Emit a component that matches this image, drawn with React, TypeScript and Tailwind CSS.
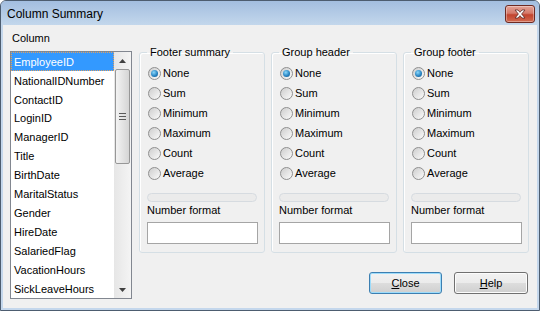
import React from 'react';

const columns = [
  'EmployeeID',
  'NationalIDNumber',
  'ContactID',
  'LoginID',
  'ManagerID',
  'Title',
  'BirthDate',
  'MaritalStatus',
  'Gender',
  'HireDate',
  'SalariedFlag',
  'VacationHours',
  'SickLeaveHours',
];

const options = ['None', 'Sum', 'Minimum', 'Maximum', 'Count', 'Average'];

const groups = ['Footer summary', 'Group header', 'Group footer'];

function Radio({ label, checked }: { label: string; checked?: boolean }) {
  return (
    <div className="flex h-[20px] items-center pl-[1px]">
      <div className="flex h-[13px] w-[13px] items-center justify-center rounded-full border border-[#8f8f8f] bg-linear-to-br from-[#cdcdcd] to-[#fbfbfb]">
        {checked && (
          <div className="h-[7px] w-[7px] rounded-full bg-[radial-gradient(circle_at_40%_35%,#8ad8fb,#2a86c4_55%,#0c4f84)]" />
        )}
      </div>
      <span className="ml-[2px] leading-[13px]">{label}</span>
    </div>
  );
}

function GroupBox({ title }: { title: string }) {
  return (
    <fieldset className="w-[126px] rounded-[3px] border border-[#d5dfe5] pl-[7px] pr-[6px] pb-[8px] shadow-[inset_1px_1px_0_#fff]">
      <legend className="px-[3px] leading-[13px]">{title}</legend>
      <div className="flex flex-col pt-[4px]">
        {options.map((o, i) => (
          <Radio key={o} label={o} checked={i === 0} />
        ))}
      </div>
      <div className="mt-[10px] h-[9px] w-[110px] rounded-full border border-[#d6dbe0] bg-[#ebebeb]" />
      <div className="mt-[2px] leading-[13px]">Number format</div>
      <div className="mt-[5px] h-[22px] w-[111px] border border-[#a5a5a5] bg-white" />
    </fieldset>
  );
}

function ScrollArrow({ up }: { up?: boolean }) {
  return (
    <div className="flex h-[17px] w-[17px] items-center justify-center">
      <svg width="7" height="4" viewBox="0 0 7 4">
        {up ? (
          <path d="M3.5 0 L7 4 L0 4 Z" fill="#404040" />
        ) : (
          <path d="M0 0 L7 0 L3.5 4 Z" fill="#404040" />
        )}
      </svg>
    </div>
  );
}

export default function App() {
  return (
    <div className="flex h-[311px] w-[540px] flex-col overflow-hidden rounded-t-[6px] border border-[#4d5d70] bg-[#c4d7ec] font-['Liberation_Sans',Arial,sans-serif] text-[11px] text-black">
      {/* title bar */}
      <div className="flex h-[24px] items-start justify-between bg-linear-to-b from-[#a3bee0] to-[#c3d7ec] pt-[4px]">
        <span className="ml-[6px] h-[19px] text-[12px] leading-[19px] text-black">Column Summary</span>
        <div className="mr-[4px] flex h-[18px] w-[30px] items-center justify-center rounded-[3px] border border-[#6e2a22] bg-[linear-gradient(to_bottom,#e4a296_0%,#d57a6a_45%,#c2442f_55%,#d26a4f_100%)] shadow-[inset_0_0_0_1px_rgba(255,255,255,0.35)]">
          <svg width="12" height="10" viewBox="0 0 12 10">
            <path
              d="M1 1 L4 1 L6 3.3 L8 1 L11 1 L7.6 5 L11 9 L8 9 L6 6.7 L4 9 L1 9 L4.4 5 Z"
              fill="#fff"
              stroke="#5a2a24"
              strokeWidth="0.8"
              strokeLinejoin="round"
            />
          </svg>
        </div>
      </div>

      {/* body */}
      <div className="mx-[2px] mb-[2px] flex flex-1 bg-[#f0f0f0] pl-[7px] pr-[8px]">
        <div className="flex flex-col pt-[7px]">
          <div className="mb-[6px] h-[13px] pl-[2px] leading-[13px]">Column</div>
          <div className="flex h-[248px] w-[122px] border border-[#828790] bg-white">
            <div className="flex w-[103px] flex-col">
              {columns.map((c, i) => (
                <div
                  key={c}
                  className={
                    i === 0
                      ? 'flex h-[19px] items-center bg-[#3399ff] pl-[3px] pt-[1px] text-white outline-1 -outline-offset-1 outline-dotted outline-[#e0a060]'
                      : 'flex h-[19px] items-center pl-[3px] pt-[1px]'
                  }
                >
                  {c}
                </div>
              ))}
            </div>
            <div className="flex w-[17px] flex-col bg-linear-to-r from-[#e6e6e6] to-[#f4f4f4]">
              <ScrollArrow up />
              <div className="mx-[1px] flex h-[95px] flex-col items-center justify-center gap-[2px] rounded-[2px] border border-[#979797] bg-linear-to-r from-[#f3f3f3] to-[#d5d5d5]">
                <div className="h-[1px] w-[7px] bg-[#5a5a5a]" />
                <div className="h-[1px] w-[7px] bg-[#5a5a5a]" />
                <div className="h-[1px] w-[7px] bg-[#5a5a5a]" />
              </div>
              <div className="flex-1" />
              <ScrollArrow />
            </div>
          </div>
        </div>

        <div className="ml-[7px] flex flex-1 flex-col pt-[21px]">
          <div className="flex gap-[6px]">
            {groups.map((g) => (
              <GroupBox key={g} title={g} />
            ))}
          </div>
          <div className="mt-[19px] flex justify-end gap-[12px] pr-[1px]">
            <button className="flex h-[22px] w-[73px] items-center justify-center rounded-[3px] border border-[#3c7fb1] bg-[linear-gradient(to_bottom,#f2f2f2_0%,#ebebeb_50%,#dddddd_50%,#cfcfcf_100%)] shadow-[inset_0_0_0_1px_#9ddcfb]">
              <span>
                <span className="underline">C</span>lose
              </span>
            </button>
            <button className="flex h-[22px] w-[74px] items-center justify-center rounded-[3px] border border-[#707070] bg-[linear-gradient(to_bottom,#f2f2f2_0%,#ebebeb_50%,#dddddd_50%,#cfcfcf_100%)] shadow-[inset_0_0_0_1px_#fcfcfc]">
              <span>
                <span className="underline">H</span>elp
              </span>
            </button>
          </div>
        </div>
      </div>
    </div>
  );
}
